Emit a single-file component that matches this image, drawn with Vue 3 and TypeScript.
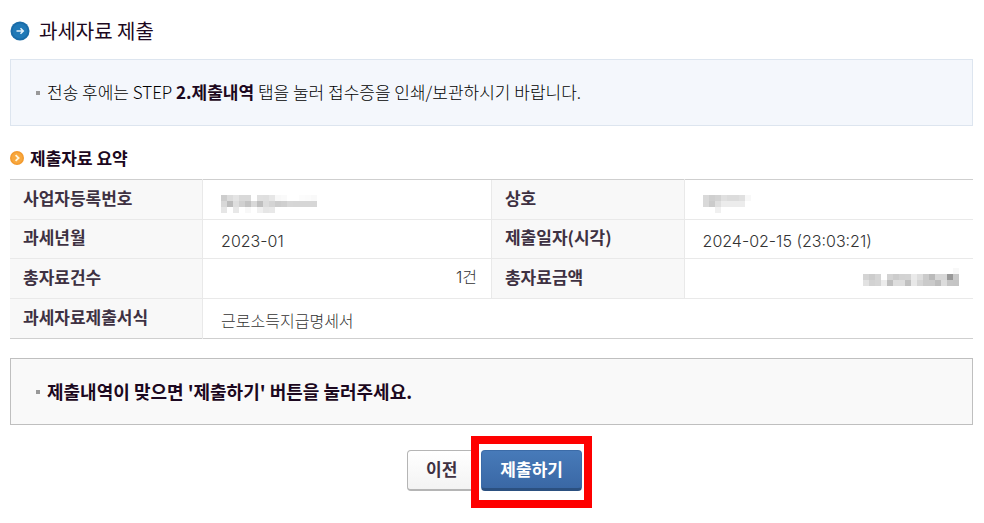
<script setup lang="ts">
import { computed } from 'vue'

interface Mosaic {
  width: number
  rows: string[]
}

// Each hex digit pair is the grey level of one masking cell; ff is empty.
const maskedNumber: Mosaic = {
  width: 16,
  rows: [
    'cd dc e4 d9 d9 ff e0 df e6 f8 fa ff ff fc fb f9',
    'd8 bd de d0 c3 d9 bf dc d4 cc cf d7 d6 d6 d6 d6',
    'e6 ff e8 ff f8 ff f0 e6 e8 ff ff ff ff ff ff ff',
  ],
}
const maskedName: Mosaic = {
  width: 8,
  rows: ['d9 cf d3 e0 dc dc e0 f8', 'd9 cb df ec ec ec ec ff', 'ff ff f0 ff ff ff ff ff'],
}
const maskedAmount: Mosaic = {
  width: 16,
  rows: [
    'ff ff ff ff ff ff ff ff ff ff ff ff ff ff ff f8',
    'd4 cc d5 ff d3 cc d2 d3 ea de cb ba d7 d7 98 c8',
    'e2 d2 d5 ec bf dd dd c0 e8 d5 ca ca bd dc c5 c4',
  ],
}

function cells(m: Mosaic) {
  return m.rows.flatMap((row, y) =>
    row.split(' ').map((g, x) => ({ x: x * 6, y: y * 6, fill: `#${g}${g}${g}` })).filter((c) => c.fill !== '#ffffff'),
  )
}
const numberCells = computed(() => cells(maskedNumber))
const nameCells = computed(() => cells(maskedName))
const amountCells = computed(() => cells(maskedAmount))
</script>

<template>
  <main class="page">
    <h1 class="title">
      <svg class="title-icon" viewBox="0 0 20 20" aria-hidden="true">
        <circle cx="10" cy="10" r="9.5" fill="#1a6ca8" />
        <circle cx="10" cy="10" r="7.5" fill="#2079b7" />
        <path d="M6.5 10H13M10.5 7.2L13.3 10L10.5 12.8" fill="none" stroke="#e4f2fb" stroke-width="1.5" />
      </svg>
      과세자료 제출
    </h1>

    <p class="notice info">전송 후에는 STEP <strong>2.제출내역</strong> 탭을 눌러 접수증을 인쇄/보관하시기 바랍니다.</p>

    <h2 class="subtitle">
      <svg class="subtitle-icon" viewBox="0 0 14 14" aria-hidden="true">
        <circle cx="7" cy="7" r="7" fill="#f29a2e" />
        <circle cx="7" cy="7" r="5.5" fill="#f8a73d" />
        <path d="M5.6 4.2L8.6 7L5.6 9.8" fill="none" stroke="#fff6dc" stroke-width="1.8" />
      </svg>
      제출자료 요약
    </h2>

    <table class="summary">
      <tbody>
        <tr>
          <th scope="row">사업자등록번호</th>
          <td>
            <svg class="mask" width="96" height="18" aria-hidden="true">
              <rect v-for="(c, i) in numberCells" :key="i" :x="c.x" :y="c.y" width="6" height="6" :fill="c.fill" />
            </svg>
          </td>
          <th scope="row">상호</th>
          <td>
            <svg class="mask" width="48" height="18" aria-hidden="true">
              <rect v-for="(c, i) in nameCells" :key="i" :x="c.x" :y="c.y" width="6" height="6" :fill="c.fill" />
            </svg>
          </td>
        </tr>
        <tr>
          <th scope="row">과세년월</th>
          <td>2023-01</td>
          <th scope="row">제출일자(시각)</th>
          <td>2024-02-15 (23:03:21)</td>
        </tr>
        <tr>
          <th scope="row">총자료건수</th>
          <td class="num">1건</td>
          <th scope="row">총자료금액</th>
          <td class="num">
            <svg class="mask" width="96" height="18" aria-hidden="true">
              <rect v-for="(c, i) in amountCells" :key="i" :x="c.x" :y="c.y" width="6" height="6" :fill="c.fill" />
            </svg>
          </td>
        </tr>
        <tr>
          <th scope="row">과세자료제출서식</th>
          <td colspan="3">근로소득지급명세서</td>
        </tr>
      </tbody>
    </table>

    <p class="notice confirm"><strong>제출내역이 맞으면 '제출하기' 버튼을 눌러주세요.</strong></p>

    <div class="actions">
      <button type="button" class="btn prev">이전</button>
      <div class="highlight">
        <button type="button" class="btn primary">제출하기</button>
      </div>
    </div>
  </main>
</template>

<style>
body {
  margin: 0;
  background: #fff;
}
</style>

<style scoped>
.page {
  padding: 19px 11px 15px 10px;
  font-family: 'Noto Sans CJK KR', sans-serif;
  font-size: 17px;
  font-weight: 300;
  line-height: 24px;
  color: #000;
}
.title {
  display: flex;
  align-items: center;
  gap: 9px;
  margin: 0 0 16px;
  font-size: 20px;
  font-weight: 400;
  color: #1c0820;
}
.title-icon {
  width: 20px;
  height: 20px;
}
.notice {
  display: block;
  position: relative;
  margin: 0;
  padding: 20px 36px 21px;
  border: 1px solid;
}
.notice::before {
  content: '';
  position: absolute;
  left: 25px;
  top: 31px;
  width: 4px;
  height: 4px;
  background: #999;
}
.notice strong {
  font-weight: 700;
  color: #1c0820;
}
.info {
  background: #f4f7fc;
  border-color: #dde5ef;
}
.confirm {
  margin-top: 19px;
  background: #f9f9f9;
  border-color: #bfbfbf;
  font-size: 18px;
}
.subtitle {
  display: flex;
  align-items: center;
  gap: 6px;
  margin: 20px 0 9px;
  font-size: 17px;
  font-weight: 700;
  color: #1c0820;
}
.subtitle-icon {
  width: 14px;
  height: 14px;
}
.summary {
  width: 100%;
  table-layout: fixed;
  border-collapse: collapse;
  border-top: 1px solid #cfcfcf;
  border-bottom: 1px solid #cfcfcf;
  color: #333;
}
.summary th,
.summary td {
  box-sizing: border-box;
  height: 40px;
  border-top: 1px solid #e9e9e9;
  vertical-align: middle;
}
.summary tr:nth-child(2) > * {
  height: 39px;
}
.summary tr:first-child > * {
  border-top-color: #cfcfcf;
}
.summary th {
  width: 20%;
  padding: 0 12px 4px 13px;
  border-right: 1px solid #e9e9e9;
  background: #f8f8f8;
  color: #3e3142;
  font-weight: 700;
  text-align: left;
}
.summary td {
  width: 30%;
  padding: 4px 14px 0 18px;
  font-family: Inter, 'Noto Sans CJK KR', sans-serif;
  font-size: 16px;
}
.summary td + th {
  border-left: 1px solid #e9e9e9;
}
.summary .num {
  padding-top: 0;
  padding-bottom: 4px;
  text-align: right;
}
.mask {
  display: block;
  margin-top: 5px;
}
.num .mask {
  margin: 0 0 0 auto;
}
.actions {
  display: flex;
  justify-content: center;
  align-items: flex-start;
  margin-top: 11px;
  padding-left: 16px;
}
.btn {
  height: 41px;
  padding: 0 18px 2px;
  border: 1px solid #b5b5b5;
  border-bottom-width: 2px;
  border-radius: 4px;
  background: linear-gradient(#fff, #f3f3f3);
  color: #3e3142;
  font: inherit;
  font-weight: 700;
  white-space: nowrap;
  cursor: pointer;
}
.prev {
  margin-top: 14px;
}
.highlight {
  position: relative;
  display: flex;
  margin-left: -5px;
  padding: 6px 2px 9px;
  border: 8px solid #fe0000;
  background: #fff;
}
.primary {
  border-color: #3b6ba8;
  border-bottom: 3px solid #2b5080;
  background: linear-gradient(#477ab9, #3a68a5);
  color: #fff;
}
</style>
